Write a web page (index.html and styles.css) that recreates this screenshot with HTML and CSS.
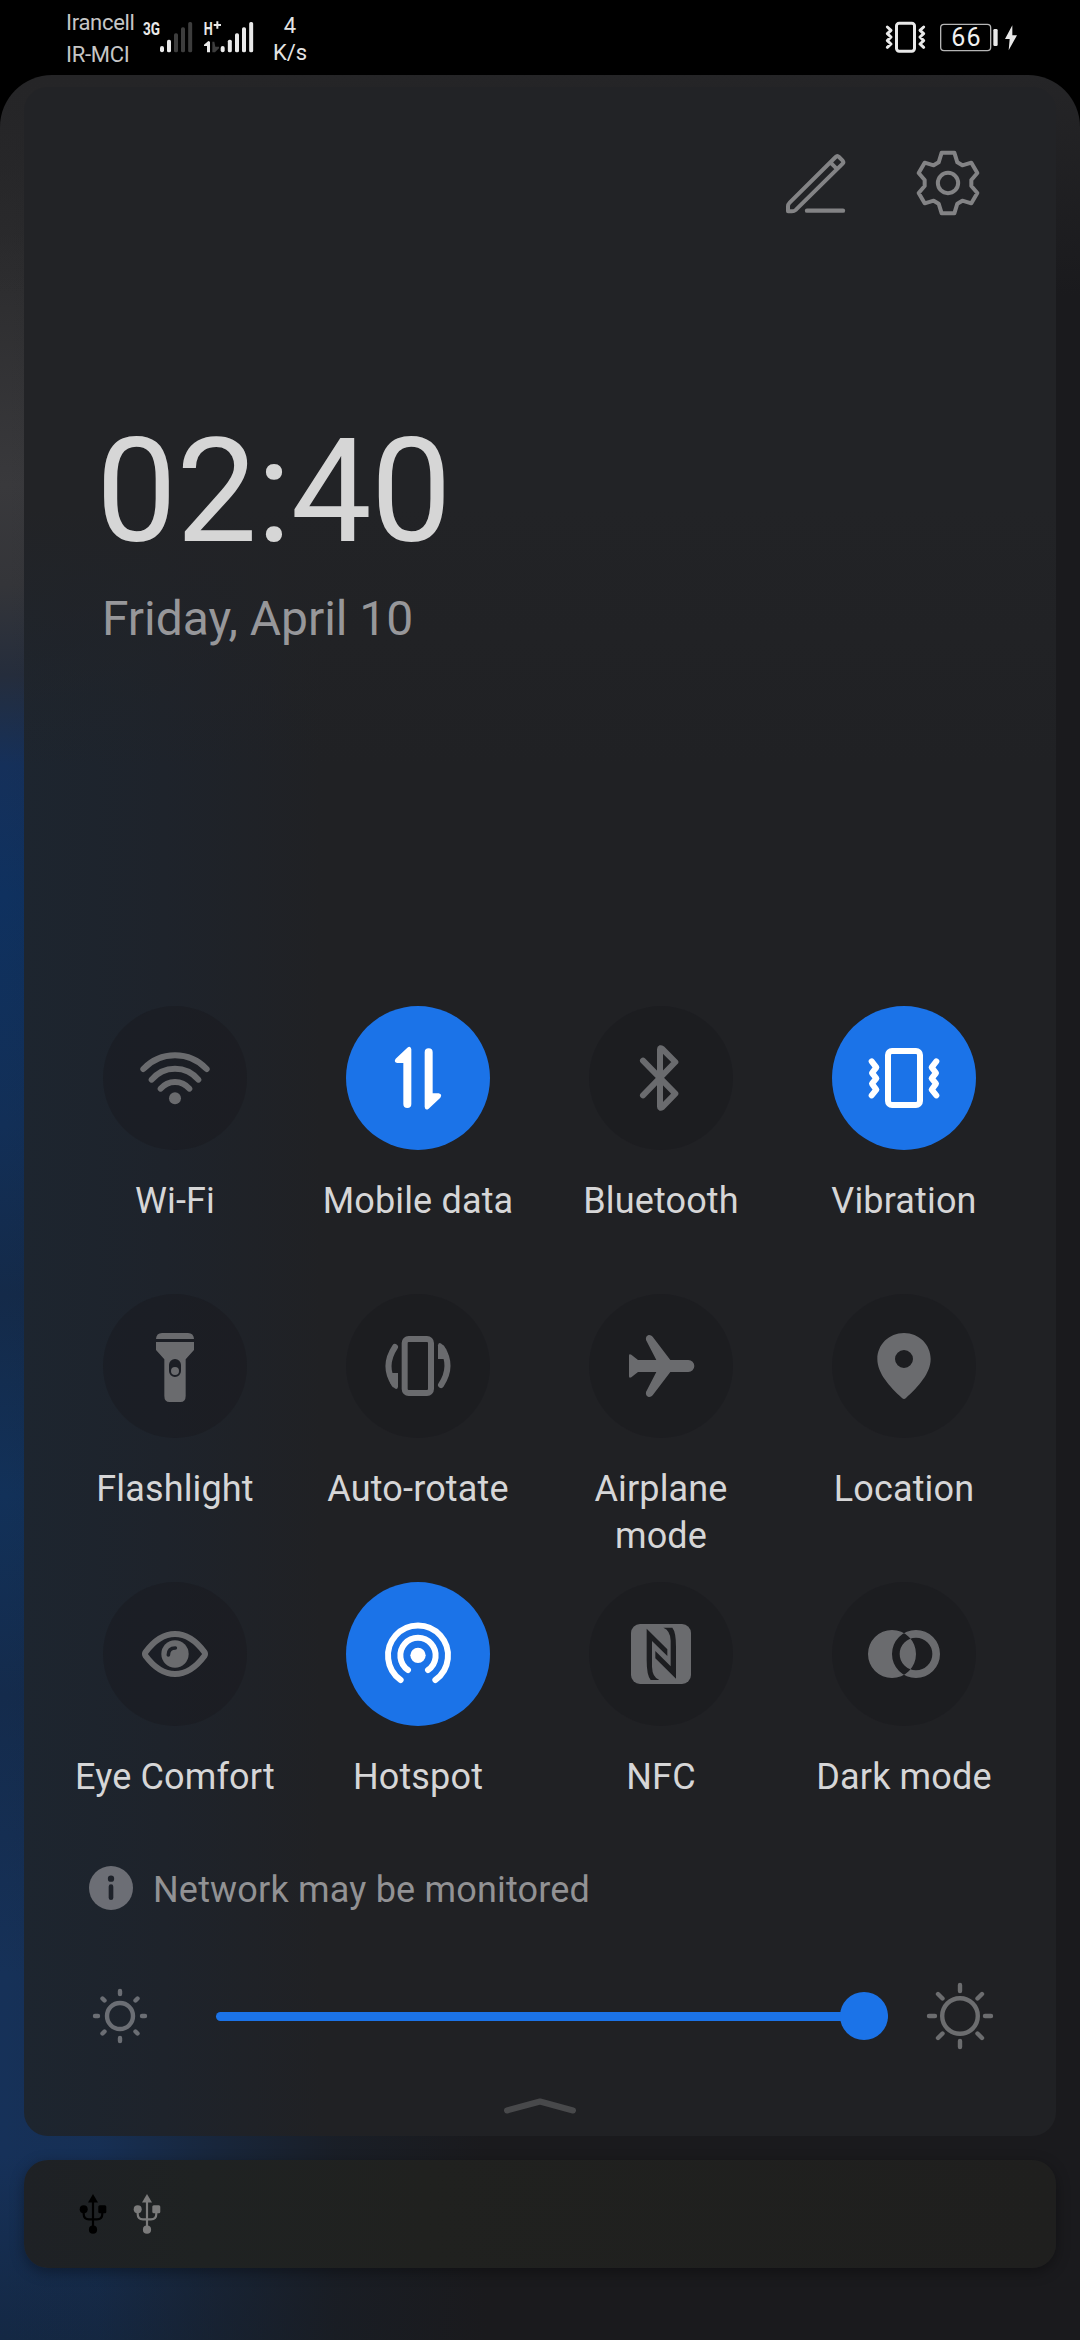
FILE: index.html
```html
<!DOCTYPE html>
<html lang="en">
<head>
<meta charset="utf-8">
<title>Quick settings</title>
<link rel="stylesheet" href="styles.css">
</head>
<body>
<header class="status">
  <div class="carriers"><span>Irancell</span><span>IR-MCI</span></div>
  <svg class="signal signal-a" viewBox="429 54 150 108">
    <text class="net-type" x="429" y="106" font-size="56" textLength="51" lengthAdjust="spacingAndGlyphs">3G</text>
    <g fill="#e9e9e9"><rect x="480" y="138" width="12" height="19" rx="6"/><rect x="501" y="119" width="12" height="38" rx="5"/></g>
    <g fill="#3d3d3d"><rect x="522" y="100" width="12" height="57" rx="5"/><rect x="543" y="82" width="12" height="75" rx="5"/><rect x="564.500" y="66" width="12" height="91" rx="5"/></g>
  </svg>
  <svg class="signal signal-b" viewBox="609 54 156 108">
    <text class="net-type" x="611" y="106" font-size="56" textLength="27" lengthAdjust="spacingAndGlyphs">H</text>
    <path d="M641 75H663M652 64V86" stroke="#e9e9e9" stroke-width="6"/>
    <path d="M630 125V157H621V138H612V134L625 123Z" fill="#e9e9e9"/>
    <path d="M637 125H643L646 140H657V145L645 157H637Z" fill="#3d3d3d"/>
    <g fill="#e9e9e9"><rect x="662" y="138" width="12" height="19" rx="6"/><rect x="683.500" y="119" width="12" height="38" rx="5"/><rect x="705" y="100" width="12" height="57" rx="5"/><rect x="726" y="82" width="12" height="75" rx="5"/><rect x="747.500" y="66" width="12" height="91" rx="5"/></g>
  </svg>
  <div class="speed"><span>4</span><span>K/s</span></div>
  <svg class="st-vibrate" viewBox="375 60 126 102" fill="none" stroke="#e9e9e9" stroke-width="9" stroke-linecap="round" stroke-linejoin="round">
    <rect x="409.500" y="69.500" width="54" height="84" rx="8"/>
    <path d="M382 81L393 91L382 101L393 111L382 122L393 132L382 142M491 81L480 91L491 101L480 111L491 122L480 132L491 142"/>
  </svg>
  <svg class="st-battery" viewBox="537 66 180 93">
    <rect x="542" y="73" width="150" height="79" rx="10" fill="none" stroke="#b5b5b5" stroke-width="4"/>
    <text class="battery-level" x="574" y="138" font-size="75" textLength="88">66</text>
    <rect x="700" y="87" width="13" height="51" rx="4" fill="#e9e9e9"/>
  </svg>
  <svg class="st-bolt" viewBox="735 75 36 78"><path d="M757 76L735 117H749L746 151L771 106H757Z" fill="#e9e9e9"/></svg>
</header>

<main class="sheet">
  <section class="panel">
    <div class="actions">
      <svg viewBox="60 441 216 216" fill="none" stroke="#838385" stroke-width="12" stroke-linecap="round" stroke-linejoin="round">
        <path d="M227 471Q232 466 237 471L248 482Q252 487 248 491L108 629Q102 634 96 634H84V619Q84 613 89 608ZM211 487L229 505"/>
        <path d="M141 632H249" stroke-width="13"/>
      </svg>
      <svg viewBox="456 441 216 216" fill="none" stroke="#838385" stroke-width="12" stroke-linejoin="round">
        <path d="M545 458H583L592 487L607 496L634 488L652 519L634 540V558L652 579L634 610L607 602L592 611L583 640H545L536 611L521 602L494 610L476 579L494 558V540L476 519L494 488L521 496L536 487Z"/>
        <circle cx="564" cy="549" r="30.500"/>
      </svg>
    </div>
    <div class="clock">02:40</div>
    <div class="date">Friday, April 10</div>

    <div class="tiles">
      <div class="tile"><svg class="disc" viewBox="129 78 432 432">
        <g fill="none" stroke="currentColor" stroke-width="18" stroke-linecap="round"><path d="M250 267A130.600 130.600 0 0 1 440 267M275 299A90.700 90.700 0 0 1 415 299M302 326A56 56 0 0 1 388 326"/></g>
        <circle cx="345" cy="355" r="18" fill="currentColor"/>
      </svg><span>Wi-Fi</span></div>
      <div class="tile on"><svg class="disc" viewBox="858 78 432 432" fill="currentColor">
        <path id="up" d="M1054 208V372a12 12 0 0 1-24 0V249H1012q-12-3-5-13L1042 203q10-7 12 5Z"/>
        <use href="#up" transform="rotate(180 1074 294.500)"/>
      </svg><span>Mobile data</span></div>
      <div class="tile"><svg class="disc" viewBox="87 78 432 432" fill="none" stroke="currentColor" stroke-width="18" stroke-linecap="round" stroke-linejoin="round">
        <path d="M249 242L346 341L306 382Q300 386 300 380V208Q300 202 306 206L346 246L249 346"/>
      </svg><span>Bluetooth</span></div>
      <div class="tile on"><svg class="disc" viewBox="816 78 432 432" fill="none" stroke="currentColor" stroke-width="18" stroke-linecap="round" stroke-linejoin="round">
        <rect x="984" y="213" width="96" height="162" rx="12"/>
        <path d="M935 244L949 262L936 279L949 295L936 311L949 329L935 346M1129 244L1115 262L1128 279L1115 295L1128 311L1115 329L1129 346"/>
      </svg><span>Vibration</span></div>

      <div class="tile"><svg class="disc" viewBox="129 72 432 432" fill="currentColor">
        <path d="M288 207Q289 189 306 189H384Q401 189 402 207Z"/>
        <path fill-rule="evenodd" d="M288 216H402V240L377 268V378Q377 396 361 396H329Q313 396 313 378V268L288 240ZM327 285V303a18 18 0 0 0 36 0V285a18 18 0 0 0-36 0Z"/>
        <circle cx="345" cy="303" r="12"/>
      </svg><span>Flashlight</span></div>
      <div class="tile"><svg class="disc" viewBox="858 72 432 432" fill="none" stroke="currentColor" stroke-width="18" stroke-linecap="round">
        <rect x="1034" y="207" width="79" height="162" rx="12"/>
        <g id="turn"><path d="M1005 231Q967 288 1003 343"/><path stroke="none" fill="currentColor" d="M990 309H1014V350Q1012 361 1004 355L990 338Z"/></g>
        <use href="#turn" transform="rotate(180 1074 288)"/>
      </svg><span>Auto-rotate</span></div>
      <div class="tile"><svg class="disc" viewBox="87 72 432 432" fill="currentColor">
        <path d="M207 257Q207 250 214 254L234 270H289L258 210Q256 198 266 195Q273 194 278 200L331 270H385a18 18 0 0 1 0 36H331L278 376Q273 382 266 381Q256 378 258 366L289 306H234L214 322Q207 326 207 319Z"/>
      </svg><span>Airplane<br>mode</span></div>
      <div class="tile"><svg class="disc" viewBox="816 72 432 432" fill="currentColor">
        <path fill-rule="evenodd" d="M1032 189C1077 189 1112 224 1112 267C1112 310 1075 350 1038 384Q1032 390 1026 384C989 350 952 310 952 267C952 224 987 189 1032 189ZM1059 267a27 27 0 1 0-54 0a27 27 0 1 0 54 0Z"/>
      </svg><span>Location</span></div>

      <div class="tile"><svg class="disc" viewBox="129 36 432 432">
        <path fill="none" stroke="currentColor" stroke-width="18" d="M257 246C283 211 312 192 345 192S407 211 433 246Q437 252 433 258C407 293 378 312 345 312S283 293 257 258Q253 252 257 246Z"/>
        <circle cx="345" cy="252" r="41" fill="currentColor"/>
        <path d="M325 255Q325 234 346 234" fill="none" stroke="#1d2027" stroke-width="11" stroke-linecap="round"/>
      </svg><span>Eye Comfort</span></div>
      <div class="tile on"><svg class="disc" viewBox="858 36 432 432">
        <path fill="none" stroke="currentColor" stroke-width="18" stroke-linecap="round" d="M1044 300A53 53 0 1 1 1104 300M1022 330A90 90 0 1 1 1126 330"/>
        <circle cx="1074" cy="256" r="23" fill="currentColor"/>
      </svg><span>Hotspot</span></div>
      <div class="tile"><svg class="disc" viewBox="87 36 432 432" fill="currentColor">
        <rect x="213" y="162" width="180" height="180" rx="27"/>
        <path fill="#1c1d20" d="M260 176L322 238V258L276 213V290Q277 322 298 330H272Q260 316 260 270ZM348 326L286 265V243L332 289V212Q331 181 310 173H337Q348 186 348 230Z"/>
      </svg><span>NFC</span></div>
      <div class="tile"><svg class="disc" viewBox="816 36 432 432" fill="currentColor">
        <path fill-rule="evenodd" d="M924 252a72 72 0 1 0 144 0a72 72 0 1 0-144 0ZM996 252a72 72 0 1 0 144 0a72 72 0 1 0-144 0ZM1019 252a49 49 0 1 0 98 0a49 49 0 1 0-98 0Z"/>
      </svg><span>Dark mode</span></div>
    </div>

    <div class="notice">
      <svg viewBox="87 886 132 132"><circle cx="153" cy="952" r="66" fill="#6c6e75"/><circle cx="153" cy="924" r="9.500" fill="#1e222a"/><path d="M153 948V981" stroke="#1e222a" stroke-width="14" stroke-linecap="round"/></svg>
      <span>Network may be monitored</span>
    </div>

    <div class="brightness">
      <svg viewBox="-36 -36 72 72" fill="none" stroke="#6b6e74" stroke-width="4.400" stroke-linecap="round">
        <circle r="13"/><path d="M0-25V-22M0 22V25M-25 0H-22M22 0H25M-17.500-17.500L-15.500-15.500M17.500-17.500L15.500-15.500M-17.500 17.500L-15.500 15.500M17.500 17.500L15.500 15.500"/>
      </svg>
      <div class="track"><div class="thumb"></div></div>
      <svg viewBox="-36 -36 72 72" fill="none" stroke="#6c6d6f" stroke-width="4.400" stroke-linecap="round">
        <circle r="17.800"/><path d="M0-31V-25M0 25V31M-31 0H-25M25 0H31M-22-22L-17.500-17.500M22-22L17.500-17.500M-22 22L-17.500 17.500M22 22L17.500 17.500"/>
      </svg>
    </div>
    <svg class="handle" viewBox="0 0 76 20"><path d="M5 14.500L38 5.500L71 14.500" fill="none" stroke="#48494b" stroke-width="6" stroke-linecap="round" stroke-linejoin="round"/></svg>
  </section>

  <section class="shade">
    <svg class="usb" viewBox="0 0 30 42">
      <g id="usb"><path d="M15 1L20 9.500H10Z" fill="currentColor"/><circle cx="5.700" cy="16.300" r="4" fill="currentColor"/><rect x="20.300" y="12.300" width="8" height="8" rx="1.500" fill="currentColor"/><circle cx="15" cy="36.700" r="4.100" fill="currentColor"/><path d="M15 8V36M5.700 17V21Q5.700 26.300 11 26.300H19Q24.300 26.300 24.300 21V17" fill="none" stroke="currentColor" stroke-width="2.200"/></g>
    </svg>
    <svg class="usb usb-light" viewBox="0 0 30 42"><use href="#usb"/></svg>
  </section>
</main>
</body>
</html>
```
FILE: styles.css
```css
* { box-sizing: border-box; }
body {
  margin: 0;
  width: 1080px;
  height: 2340px;
  overflow: hidden;
  background: #000;
  font-family: Roboto, "Noto Sans", sans-serif;
}
svg { display: block; flex: none; }

/* Status bar */
.status { display: flex; height: 75px; color: #c6c6c6; font-size: 22px; }
.carriers, .speed { display: flex; flex-direction: column; flex: none; white-space: nowrap; }
.carriers { margin-left: 66px; width: 77px; padding-top: 7px; line-height: 32px; letter-spacing: -.3px; }
.signal { height: 36px; margin-top: 18px; }
.signal-a { width: 50px; }
.signal-b { width: 52px; margin-left: 10px; }
.net-type { font-weight: 700; fill: #e9e9e9; }
.speed { width: 40px; margin-left: 15px; padding-top: 12px; line-height: 27px; text-align: center; color: #e4e4e4; }
.st-vibrate { width: 42px; height: 34px; margin: 20px 0 0 auto; }
.st-battery { width: 60px; height: 31px; margin: 22px 0 0 12px; }
.st-bolt { width: 12px; height: 26px; margin: 25px 63px 0 6px; }
.battery-level { fill: #f0f0f0; }

/* Blurred wallpaper behind the panels */
.sheet {
  height: 2265px;
  padding: 12px 24px 0;
  border-radius: 52px 52px 0 0;
  background:
    linear-gradient(180deg, #252527 0, rgba(36, 36, 38, 0) 220px),
    linear-gradient(90deg, rgba(26, 27, 30, 0) 0, rgba(26, 27, 30, .08) 9%, rgba(26, 27, 30, .5) 20%, rgba(26, 27, 30, .85) 31%, #1a1a1d 45%),
    linear-gradient(180deg, #262628 0, #2d2d2f 200px, #39393c 410px, #343539 510px, #252d3c 600px, #15305a 690px, #0f315f 820px, #122f57 1050px, #142a49 1220px, #123159 1420px, #142b4c 1620px, #163158 1900px, #163159 2080px, #142844 100%);
}

/* Control panel */
.panel {
  height: 2049px;
  padding-top: 60px;
  border-radius: 24px;
  background:
    linear-gradient(180deg, #222326 0, #222326 420px, rgba(34, 35, 38, 0) 680px),
    linear-gradient(90deg, #1d252f 0, #1e232b 140px, #202124 300px);
}
.actions { display: flex; justify-content: flex-end; gap: 60px; padding-right: 72px; }
.actions svg { width: 72px; height: 72px; }
.clock { margin: 189px 0 0 72px; font-size: 144px; line-height: 168px; letter-spacing: -.7px; color: #d6d6d6; }
.date { margin: 15px 0 0 78px; font-size: 48px; line-height: 56px; letter-spacing: -.05px; color: #97979a; }

.tiles {
  display: grid;
  grid-template-columns: repeat(4, 243px);
  grid-template-rows: 288px 288px 219px;
  margin: 359px 0 0 29.500px;
}
.tile { display: flex; flex-direction: column; align-items: center; gap: 28px; text-align: center; font-size: 36px; line-height: 47px; letter-spacing: .15px; color: #d6d6d7; white-space: nowrap; }
.disc { width: 144px; height: 144px; border-radius: 50%; background: rgba(24, 25, 29, .42); color: #6a6b6e; }
.on .disc { background: #1b73e8; color: #fff; }

.notice { display: flex; align-items: center; gap: 20px; height: 45px; margin: 64px 0 0 65px; font-size: 36px; line-height: 47px; letter-spacing: .19px; color: #929294; }
.notice svg { width: 44px; height: 44px; }
.notice span { padding-top: 6px; }

/* Brightness slider */
.brightness { display: flex; align-items: center; margin-top: 70px; padding: 0 60px; }
.brightness svg { width: 72px; height: 72px; }
.track { display: flex; align-items: center; justify-content: flex-end; flex: 1; height: 9px; margin: 1px 36px 0 60px; border-radius: 5px; background: #1b73e8; }
.thumb { flex: none; width: 48px; height: 48px; margin-top: -1px; border-radius: 50%; background: #1b73e8; }
.handle { width: 76px; height: 20px; margin: 44px auto 0; }

/* Notification strip */
.shade {
  display: flex;
  align-items: center;
  gap: 24px;
  height: 108px;
  margin-top: 24px;
  padding-left: 54px;
  border-radius: 24px;
  background: linear-gradient(90deg, #1e2125 0, #1f2222 180px, #20211f 400px, #1f1f1e);
  box-shadow: 0 4px 14px rgba(0, 0, 0, .35);
}
.usb { width: 30px; height: 42px; color: #000; }
.usb-light { color: #7b7b7b; }
```
